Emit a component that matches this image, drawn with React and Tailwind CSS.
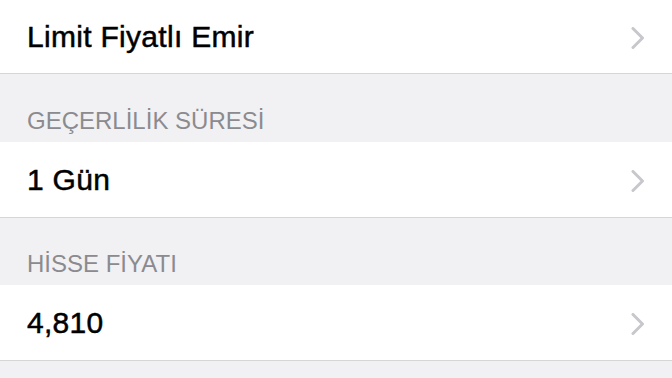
// Settings-style grouped list with disclosure rows

function Chevron() {
  return (
    <svg width="14" height="22" viewBox="0 0 14 22" fill="none" className="mt-[3px]">
      <polyline
        points="2,1.5 11.5,11 2,20.5"
        stroke="#c7c7cc"
        strokeWidth="3"
        strokeLinecap="round"
        strokeLinejoin="round"
      />
    </svg>
  );
}

function Row({ label, height }) {
  return (
    <div
      className={`flex items-center justify-between bg-white border-b border-[#d6d6d6] pl-[27px] pr-[27px] ${height}`}
    >
      <span className="text-[30px] text-black leading-none tracking-[0.3px] [-webkit-text-stroke:0.5px_black]">
        {label}
      </span>
      <Chevron />
    </div>
  );
}

function SectionHeader({ title, height }) {
  return (
    <div className={`flex items-end bg-[#f1f1f3] pl-[27px] pb-[9px] ${height}`}>
      <span className="text-[24px] text-[#8b8b8f] leading-none">{title}</span>
    </div>
  );
}

export default function App() {
  return (
    <div
      className="w-[672px] h-[378px] overflow-hidden bg-[#f1f1f3] flex flex-col"
      style={{ fontFamily: '"Liberation Sans", Arial, sans-serif' }}
    >
      <Row label="Limit Fiyatlı Emir" height="h-[74px]" />
      <SectionHeader title="GEÇERLİLİK SÜRESİ" height="h-[68px]" />
      <Row label="1 Gün" height="h-[76px]" />
      <SectionHeader title="HİSSE FİYATI" height="h-[67px]" />
      <Row label="4,810" height="h-[76px]" />
    </div>
  );
}
